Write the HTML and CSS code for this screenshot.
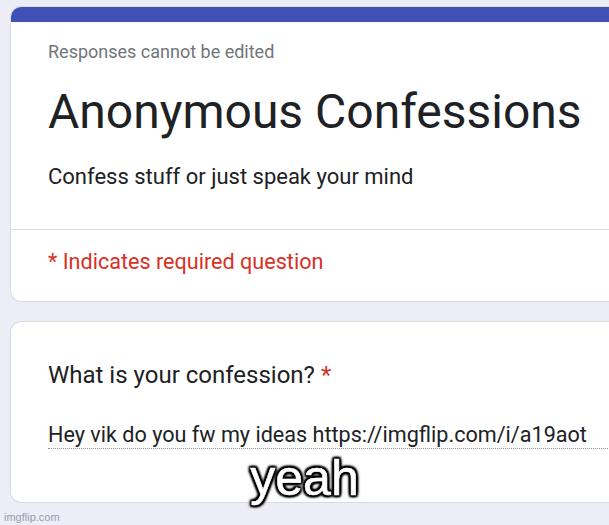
FILE: index.html
```html
<!DOCTYPE html>
<html lang="en">

<head>
    <meta charset="UTF-8">
    <title>Anonymous Confessions</title>
    <link rel="stylesheet" href="styles.css">
</head>

<body>
    <div class="page">
        <div class="card header-card">
            <div class="card-top"></div>
            <div class="header-body">
                <div class="note">Responses cannot be edited</div>
                <h1>Anonymous Confessions</h1>
                <p class="desc">Confess stuff or just speak your mind</p>
            </div>
            <div class="required-row">* Indicates required question</div>
        </div>

        <div class="card question-card">
            <div class="question">What is your confession? <span class="star">*</span></div>
            <div class="answer">Hey vik do you fw my ideas https://imgflip.com/i/a19aot</div>
        </div>
    </div>

    <div class="caption">yeah</div>
    <div class="watermark">imgflip.com</div>
</body>

</html>
```

FILE: styles.css
```css
body {
    font-family: Roboto, Arial, sans-serif;
    background: #ecedf7;
    margin: 0;
    padding: 0;
    width: 609px;
    height: 525px;
    overflow: hidden;
    position: relative;
}

.page {
    padding: 6px 0 0 10px;
}

.card {
    background: #fff;
    border: 1px solid #dadce0;
    border-right: none;
    border-radius: 11px 0 0 11px;
    width: 620px;
    box-sizing: border-box;
}

.header-card {
    overflow: hidden;
    height: 296px;
}

.card-top {
    height: 15px;
    background: #3f51b5;
}

.header-body {
    padding: 19px 0 0 37px;
    height: 208px;
    box-sizing: border-box;
    border-bottom: 1px solid #dadce0;
}

.note {
    font-size: 18px;
    line-height: 21px;
    color: #70757a;
}

h1 {
    margin: 22px 0 0;
    font-size: 48px;
    font-weight: 400;
    color: #202124;
    line-height: 56px;
}

.desc {
    margin: 24px 0 0;
    font-size: 22px;
    line-height: 26px;
    color: #202124;
}

.required-row {
    padding: 19px 0 0 37px;
    font-size: 21.6px;
    line-height: 25px;
    color: #d93025;
}

.question-card {
    margin-top: 19px;
    height: 182px;
    padding: 39px 0 0 37px;
}

.question {
    font-size: 24px;
    line-height: 28px;
    color: #202124;
}

.star {
    color: #d93025;
}

.answer {
    margin-top: 33px;
    width: 580px;
    font-size: 21.6px;
    line-height: 25px;
    color: #202124;
    padding-bottom: 1px;
    border-bottom: 1px dotted #8f9296;
}

.caption {
    position: absolute;
    left: 0;
    right: 0;
    top: 448px;
    text-align: center;
    font-family: "Liberation Sans", Arial, sans-serif;
    font-size: 50px;
    line-height: 60px;
    color: #fff;
    -webkit-text-stroke: 0.6px #fff;
    text-shadow: 2px 2px 2px #000, -2px -2px 2px #000, 2px -2px 2px #000, -2px 2px 2px #000,
        0 2px 2px #000, 0 -2px 2px #000, 2px 0 2px #000, -2px 0 2px #000, 0 0 5px #000;
}

.watermark {
    position: absolute;
    left: 4px;
    bottom: 2px;
    font-family: "Liberation Sans", Arial, sans-serif;
    font-size: 11px;
    color: #9a9ca6;
}
```
